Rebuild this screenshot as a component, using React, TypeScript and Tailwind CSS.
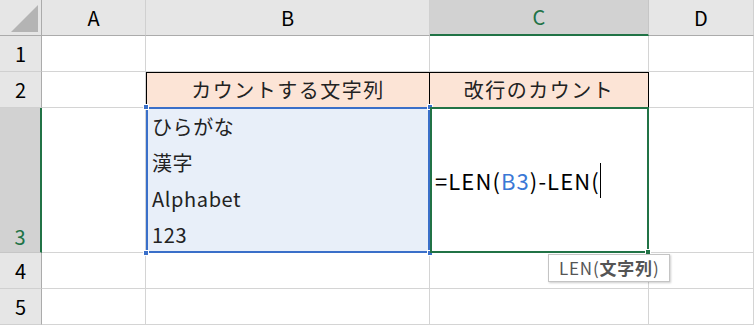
import React from "react";

const font = { fontFamily: '"Noto Sans CJK JP", "Noto Sans", sans-serif' };

const ColHead = ({ label, active }: { label: string; active?: boolean }) => (
  <div
    className={
      "flex items-center justify-center border-r border-b text-[20px] " +
      (active
        ? "border-r-[#c6c6c6] border-b-2 border-b-[#217346] bg-[#d2d2d2] text-[#217346]"
        : "border-r-[#d0d0d0] border-b-[#ababab] bg-[#e6e6e6] text-black")
    }
  >
    {label}
  </div>
);

const RowHead = ({ label, active }: { label: string; active?: boolean }) => (
  <div
    className={
      "flex justify-center border-b text-[20px] " +
      (active
        ? "items-end border-r-2 border-r-[#217346] border-b-[#c6c6c6] bg-[#d2d2d2] text-[#217346]"
        : "items-center border-r border-r-[#ababab] border-b-[#d0d0d0] bg-[#e6e6e6] text-black")
    }
  >
    {label}
  </div>
);

const Cell = ({ className = "" }: { className?: string }) => (
  <div className={"border-r border-b border-[#d4d4d4] bg-white " + className} />
);

const Handle = ({ className }: { className: string }) => (
  <div className={"absolute h-[6px] w-[6px] border border-white bg-[#3a6fc9] " + className} />
);

export default function App() {
  return (
    <div className="h-[325px] w-[754px] overflow-hidden bg-white text-black" style={font}>
      <div className="grid h-full grid-cols-[42px_104px_284px_219px_105px] grid-rows-[36px_36px_36px_145px_36px_36px]">
        {/* header row */}
        <div className="relative border-r border-b border-r-[#ababab] border-b-[#ababab] bg-[#e6e6e6]">
          <svg className="absolute left-[11px] top-[5px]" width="28" height="28" viewBox="0 0 28 28">
            <polygon points="27,0 27,27 0,27" fill="#b4b4b4" />
          </svg>
        </div>
        <ColHead label="A" />
        <ColHead label="B" />
        <ColHead label="C" active />
        <ColHead label="D" />

        {/* row 1 */}
        <RowHead label="1" />
        <Cell />
        <Cell />
        <Cell />
        <Cell />

        {/* row 2 */}
        <RowHead label="2" />
        <Cell />
        <div className="flex items-center justify-center border border-black bg-[#fce4d6] text-[20px] tracking-[1.5px] text-[#222]">
          カウントする文字列
        </div>
        <div className="-ml-px flex items-center justify-center border border-black bg-[#fce4d6] text-[20px] tracking-[1.5px] text-[#222]">
          改行のカウント
        </div>
        <Cell />

        {/* row 3 */}
        <RowHead label="3" active />
        <Cell />
        <div className="relative -mt-px border-2 border-[#3a6fc9] bg-[#e8eff9] pl-[4px] text-[20px] leading-[36px] tracking-[0.6px] text-[#222]">
          <div>ひらがな</div>
          <div>漢字</div>
          <div>Alphabet</div>
          <div>123</div>
          <Handle className="-left-[5px] -top-[5px]" />
          <Handle className="-right-[5px] -top-[5px]" />
          <Handle className="-left-[5px] -bottom-[5px]" />
          <Handle className="-right-[5px] -bottom-[5px]" />
        </div>
        <div className="relative -mt-px flex items-center border-2 border-[#217346] bg-white pl-[3px] text-[22px] tracking-[1.1px]">
          <span>=LEN(</span>
          <span className="text-[#3a78d6]">B3</span>
          <span>)-LEN(</span>
          <span className="h-[35px] w-[1px] bg-black" />
          <div className="absolute -right-[4px] -bottom-[4px] h-[6px] w-[6px] border border-white bg-[#217346]" />
          <div className="absolute left-[116px] top-[145px] z-10 flex h-[28px] items-center whitespace-nowrap border border-[#c4c4c4] bg-white px-[10px] text-[17px] tracking-[0.8px] text-[#555] shadow-[1px_1px_2px_rgba(0,0,0,0.2)]">
            LEN(<b className="font-bold">文字列</b>)
          </div>
        </div>
        <Cell />

        {/* row 4 */}
        <RowHead label="4" />
        <Cell />
        <Cell />
        <Cell />
        <Cell />

        {/* row 5 */}
        <RowHead label="5" />
        <Cell />
        <Cell />
        <Cell />
        <Cell />
      </div>
    </div>
  );
}
